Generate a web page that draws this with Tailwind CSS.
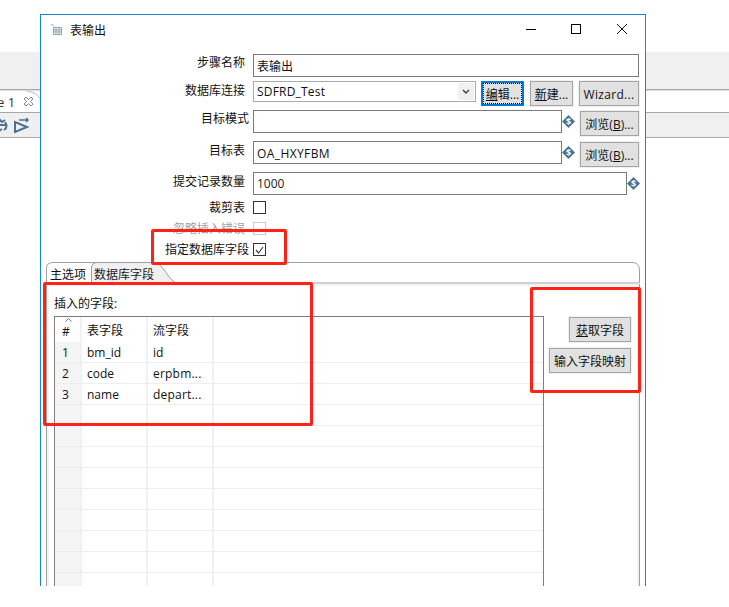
<!DOCTYPE html>
<html lang="en">
<head>
    <meta charset="UTF-8">
    <title>表输出</title>
    <script src="https://cdn.jsdelivr.net/npm/@tailwindcss/browser@4"></script>
</head>
<body class="relative w-[729px] h-[607px] overflow-hidden bg-white text-[12px] leading-[16px] text-[#111] font-['Open_Sans','Noto_Sans_CJK_SC',sans-serif]">

    <!-- main window behind the dialog -->
    <div class="absolute left-0 top-[52px] w-full">
        <div class="h-[37px] bg-[#f0f0f0]"></div>
        <div class="h-[1px] bg-[#a8a8a8]"></div>
        <div class="relative h-[22px] bg-white pt-[3px] border-t border-[#dcdcdc] flex items-start">
            <span class="ml-[-3px] text-[13px] text-[#333]">e 1</span>
            <svg class="ml-[8px] mt-[2px]" width="11" height="11" viewBox="0 0 11 11" fill="none" stroke="#8a8a8a"><path d="M1 3l2-2 2.500 2.500L8 1l2 2-2.500 2.500L10 8l-2 2-2.500-2.500L3 10 1 8l2.500-2.500z"/></svg>
            <svg class="absolute left-[27px] top-[0px]" width="13" height="8" viewBox="0 0 13 8" fill="none" stroke="#b5b5b5"><path d="M0 0.500C5 0.500 9 2 13 7.500"/></svg>
        </div>
        <div class="h-[1px] bg-[#a8a8a8]"></div>
        <div class="h-[24px] bg-[#f0f0f0] flex items-center">
            <svg class="ml-[-2px]" width="10" height="15" viewBox="0 0 10 15" fill="none" stroke="#4b7293" stroke-width="2"><path d="M1 1l3 3 3-2M2 7h6M7 4c2 3 2 6-1 8M1 13l3-2"/></svg>
            <svg class="ml-[6px]" width="16" height="17" viewBox="0 0 16 17" fill="none" stroke="#4b7293" stroke-width="2"><path d="M1 5v10l12-5z"/><path d="M5 3h9M12 1l2 2-2 2" stroke-width="1.500"/></svg>
        </div>
        <div class="h-[1px] bg-[#a8a8a8]"></div>
    </div>

    <!-- dialog -->
    <div class="absolute left-[40px] top-[14px] w-[606px] h-[572px] bg-white border border-b-0 border-[#1883d7] overflow-hidden">

        <!-- title bar -->
        <div class="relative h-[39px] flex items-start pl-[9px] pt-[8px]">
            <svg class="mt-[1px]" width="13" height="12" viewBox="0 0 13 12" fill="none"><path d="M1 0l3 2" stroke="#9aa4ad"/><path d="M3.500 3.500h8v7h-8zM3.500 6h8M3.500 8h8M6 3.500v7M9 3.500v7" stroke="#8fa3b3"/></svg>
            <span class="ml-[7px]">表输出</span>
            <div class="ml-auto flex items-center pt-[1px] pr-[18px]">
                <div class="w-[10px] h-[1px] bg-black"></div>
                <div class="ml-[35px] w-[10px] h-[10px] border border-black"></div>
                <svg class="ml-[36px]" width="10" height="10" viewBox="0 0 10 10" stroke="#111"><path d="M0 0l10 10M10 0L0 10"/></svg>
            </div>
        </div>

        <!-- form rows -->
        <div class="flex h-[23px]">
            <label class="w-[204px] pt-[1px] text-right">步骤名称</label>
            <div class="ml-[8px] w-[386px] h-[23px] border border-[#7a7a7a] pl-[3px] pt-[4px]">表输出</div>
        </div>

        <div class="flex h-[26px] mt-[4px]">
            <label class="w-[204px] text-right pt-[2px]">数据库连接</label>
            <div class="ml-[8px] w-[223px] h-[21px] border border-[#ababab] pl-[3px] pt-[2px] flex justify-between">
                <span class="tracking-[0.2px]">SDFRD_Test</span>
                <div class="w-[16px] h-[17px] mt-[-1px] mr-[1px] bg-[#f0f0f0] flex items-center justify-center">
                    <svg width="8" height="6" viewBox="0 0 8 6" fill="none" stroke="#444" stroke-width="1.500"><path d="M1 1l3 3 3-3"/></svg>
                </div>
            </div>
            <button class="ml-[5px] w-[43px] h-[25px] pt-[2px] border-2 border-[#0078d7] bg-[#e1e1e1] outline-1 outline-dotted outline-black outline-offset-[-3px]"><span class="underline">编</span>辑...</button>
            <button class="ml-[6px] w-[43px] h-[25px] pt-[2px] border border-[#a5a5a5] bg-[#e1e1e1] outline outline-[#f0f0f0]"><span class="underline">新</span>建...</button>
            <button class="ml-[6px] w-[60px] h-[25px] pt-[2px] tracking-[0.3px] border border-[#a5a5a5] bg-[#e1e1e1] outline outline-[#f0f0f0]">Wizard...</button>
        </div>

        <div class="flex h-[26px] mt-[3px]">
            <label class="w-[208px] text-right pt-[1px]">目标模式</label>
            <div class="ml-[4px] w-[309px] h-[23px] border border-[#7a7a7a]"></div>
            <svg class="mt-[5px]" width="13" height="13" viewBox="0 0 13 13"><path d="M6.500 0L13 6.500 6.500 13 0 6.500z" fill="#4a7394"/><text x="6.500" y="10" text-anchor="middle" font-size="9" font-weight="700" fill="#fff">$</text></svg>
            <button class="ml-[5px] w-[59px] h-[25px] mt-[1px] pt-[2px] border border-[#a5a5a5] bg-[#e1e1e1] outline outline-[#f0f0f0]">浏览(<span class="underline">B</span>)...</button>
        </div>

        <div class="flex h-[26px] mt-[5px]">
            <label class="w-[204px] text-right pt-[2px]">目标表</label>
            <div class="ml-[8px] w-[309px] h-[23px] border border-[#7a7a7a] pl-[3px] pt-[4px] tracking-[0.4px]">OA_HXYFBM</div>
            <svg class="mt-[5px]" width="13" height="13" viewBox="0 0 13 13"><path d="M6.500 0L13 6.500 6.500 13 0 6.500z" fill="#4a7394"/><text x="6.500" y="10" text-anchor="middle" font-size="9" font-weight="700" fill="#fff">$</text></svg>
            <button class="ml-[5px] w-[59px] h-[25px] mt-[1px] pt-[2px] border border-[#a5a5a5] bg-[#e1e1e1] outline outline-[#f0f0f0]">浏览(<span class="underline">B</span>)...</button>
        </div>

        <div class="flex h-[23px] mt-[5px]">
            <label class="w-[204px] text-right pt-[2px]">提交记录数量</label>
            <div class="ml-[8px] w-[374px] h-[23px] border border-[#7a7a7a] pl-[3px] pt-[3px] text-[#222]">1000</div>
            <svg class="mt-[5px]" width="13" height="13" viewBox="0 0 13 13"><path d="M6.500 0L13 6.500 6.500 13 0 6.500z" fill="#4a7394"/><text x="6.500" y="10" text-anchor="middle" font-size="9" font-weight="700" fill="#fff">$</text></svg>
        </div>

        <div class="flex h-[13px] mt-[6px]">
            <label class="w-[204px] text-right leading-[13px]">裁剪表</label>
            <div class="ml-[8px] w-[13px] h-[13px] border border-[#333]"></div>
        </div>

        <div class="flex h-[13px] mt-[8px]">
            <label class="w-[204px] text-right leading-[13px] text-[#a0a0a0]">忽略插入错误</label>
            <div class="ml-[8px] w-[13px] h-[13px] border border-[#ccc]"></div>
        </div>

        <div class="flex h-[13px] mt-[8px]">
            <label class="w-[208px] text-right leading-[13px]">指定数据库字段</label>
            <div class="ml-[4px] w-[13px] h-[13px] border border-[#333] flex items-center justify-center">
                <svg width="9" height="8" viewBox="0 0 9 8" fill="none" stroke="#444" stroke-width="1.200"><path d="M1 4l2.500 3L8 1"/></svg>
            </div>
        </div>

        <!-- tab folder -->
        <div class="relative ml-[5px] w-[594px] h-[22px] mt-[6px]">
            <svg class="absolute inset-0" width="594" height="22" viewBox="0 0 594 22" fill="none">
                <path d="M45.500 21V5Q46 1 50 0.500L109 0.500C118 2 122 19 131 21Z" fill="#f0f0f0"/>
                <path d="M0.500 21V6Q0.500 0.500 7 0.500H586Q593.500 0.500 593.500 8V21" stroke="#a0a0a0"/>
                <path d="M45.500 21V5Q46 1 50 0.500M109 0.500C118 2 122 19 131 21H593" stroke="#a0a0a0"/>
            </svg>
            <span class="absolute left-[4px] top-[5px]">主选项</span>
            <span class="absolute left-[48px] top-[5px] text-[#222]">数据库字段</span>
        </div>

        <!-- tab panel -->
        <div class="relative ml-[5px] w-[594px] h-[303px] border-x border-[#a0a0a0] pt-[2px]">
            <div class="absolute inset-x-0 top-0 h-[2px] bg-[#f3f3f3]"></div>
            <div class="absolute left-0 top-0 bottom-0 w-[2px] bg-[#f3f3f3]"></div>
            <div class="absolute right-0 top-0 bottom-0 w-[2px] bg-[#f3f3f3]"></div>
            <p class="pl-[7px] pt-[10px] h-[30px]">插入的字段:</p>

            <div class="flex">
                <!-- fields table -->
                <div class="ml-[7px] w-[490px] border-x border-t border-[#7f7f7f] h-[270px]">
                    <div class="flex h-[25px]">
                        <div class="relative w-[27px] pl-[7px] pt-[7px] border-r-2 border-[#eef1f8]">#<svg class="absolute left-[10px] top-[1px]" width="7" height="4" viewBox="0 0 7 4" fill="none" stroke="#777"><path d="M0.500 3.500L3.500 0.500l3 3"/></svg></div>
                        <div class="w-[66px] pl-[5px] pt-[6px] border-r-2 border-[#eef1f8]">表字段</div>
                        <div class="w-[66px] pl-[5px] pt-[6px] border-r-2 border-[#eef1f8]">流字段</div>
                    </div>
                    <div class="flex h-[21px] border-b border-[#eeeeee]">
                        <div class="w-[27px] pl-[7px] pt-[3px] bg-[#f5f5f5] border-r-2 border-[#eef1f8]">1</div>
                        <div class="w-[66px] pl-[5px] pt-[3px] border-r-2 border-[#eef1f8]">bm_id</div>
                        <div class="w-[66px] pl-[5px] pt-[3px] border-r-2 border-[#eef1f8]">id</div>
                    </div>
                    <div class="flex h-[21px] border-b border-[#eeeeee]">
                        <div class="w-[27px] pl-[7px] pt-[3px] bg-[#f5f5f5] border-r-2 border-[#eef1f8]">2</div>
                        <div class="w-[66px] pl-[5px] pt-[3px] border-r-2 border-[#eef1f8]">code</div>
                        <div class="w-[66px] pl-[5px] pt-[3px] tracking-[0.2px] border-r-2 border-[#eef1f8]">erpbm...</div>
                    </div>
                    <div class="flex h-[21px] border-b border-[#eeeeee]">
                        <div class="w-[27px] pl-[7px] pt-[3px] bg-[#f5f5f5] border-r-2 border-[#eef1f8]">3</div>
                        <div class="w-[66px] pl-[5px] pt-[3px] border-r-2 border-[#eef1f8]">name</div>
                        <div class="w-[66px] pl-[5px] pt-[3px] tracking-[0.2px] border-r-2 border-[#eef1f8]">depart...</div>
                    </div>
                    <div class="flex h-[21px] border-b border-[#eeeeee]"><div class="w-[27px] bg-[#f5f5f5] border-r-2 border-[#eef1f8]"></div><div class="w-[66px] border-r-2 border-[#eef1f8]"></div><div class="w-[66px] border-r-2 border-[#eef1f8]"></div></div>
                    <div class="flex h-[21px] border-b border-[#eeeeee]"><div class="w-[27px] bg-[#f5f5f5] border-r-2 border-[#eef1f8]"></div><div class="w-[66px] border-r-2 border-[#eef1f8]"></div><div class="w-[66px] border-r-2 border-[#eef1f8]"></div></div>
                    <div class="flex h-[21px] border-b border-[#eeeeee]"><div class="w-[27px] bg-[#f5f5f5] border-r-2 border-[#eef1f8]"></div><div class="w-[66px] border-r-2 border-[#eef1f8]"></div><div class="w-[66px] border-r-2 border-[#eef1f8]"></div></div>
                    <div class="flex h-[21px] border-b border-[#eeeeee]"><div class="w-[27px] bg-[#f5f5f5] border-r-2 border-[#eef1f8]"></div><div class="w-[66px] border-r-2 border-[#eef1f8]"></div><div class="w-[66px] border-r-2 border-[#eef1f8]"></div></div>
                    <div class="flex h-[21px] border-b border-[#eeeeee]"><div class="w-[27px] bg-[#f5f5f5] border-r-2 border-[#eef1f8]"></div><div class="w-[66px] border-r-2 border-[#eef1f8]"></div><div class="w-[66px] border-r-2 border-[#eef1f8]"></div></div>
                    <div class="flex h-[21px] border-b border-[#eeeeee]"><div class="w-[27px] bg-[#f5f5f5] border-r-2 border-[#eef1f8]"></div><div class="w-[66px] border-r-2 border-[#eef1f8]"></div><div class="w-[66px] border-r-2 border-[#eef1f8]"></div></div>
                    <div class="flex h-[21px] border-b border-[#eeeeee]"><div class="w-[27px] bg-[#f5f5f5] border-r-2 border-[#eef1f8]"></div><div class="w-[66px] border-r-2 border-[#eef1f8]"></div><div class="w-[66px] border-r-2 border-[#eef1f8]"></div></div>
                    <div class="flex h-[21px] border-b border-[#eeeeee]"><div class="w-[27px] bg-[#f5f5f5] border-r-2 border-[#eef1f8]"></div><div class="w-[66px] border-r-2 border-[#eef1f8]"></div><div class="w-[66px] border-r-2 border-[#eef1f8]"></div></div>
                    <div class="flex h-[21px] border-b border-[#eeeeee]"><div class="w-[27px] bg-[#f5f5f5] border-r-2 border-[#eef1f8]"></div><div class="w-[66px] border-r-2 border-[#eef1f8]"></div><div class="w-[66px] border-r-2 border-[#eef1f8]"></div></div>
                </div>

                <!-- buttons on the right -->
                <div class="ml-[5px] mt-[1px] w-[82px] flex flex-col items-end gap-[6px]">
                    <button class="w-[62px] h-[25px] pt-[2px] border border-[#a5a5a5] bg-[#e1e1e1] outline outline-[#f0f0f0]"><span class="underline">获</span>取字段</button>
                    <button class="w-[82px] h-[25px] pt-[2px] border border-[#a5a5a5] bg-[#e1e1e1] outline outline-[#f0f0f0]">输入字段映射</button>
                </div>
            </div>
        </div>
    </div>

    <!-- red annotation boxes -->
    <div class="absolute left-[151px] top-[229px] w-[136px] h-[36px] border-[3px] border-[#ff2217] rounded-[2px]"></div>
    <div class="absolute left-[43px] top-[282px] w-[270px] h-[144px] border-[3px] border-[#ff2217] rounded-[2px]"></div>
    <div class="absolute left-[530px] top-[287px] w-[111px] h-[106px] border-[3px] border-[#ff2217] rounded-[2px]"></div>
</body>
</html>
